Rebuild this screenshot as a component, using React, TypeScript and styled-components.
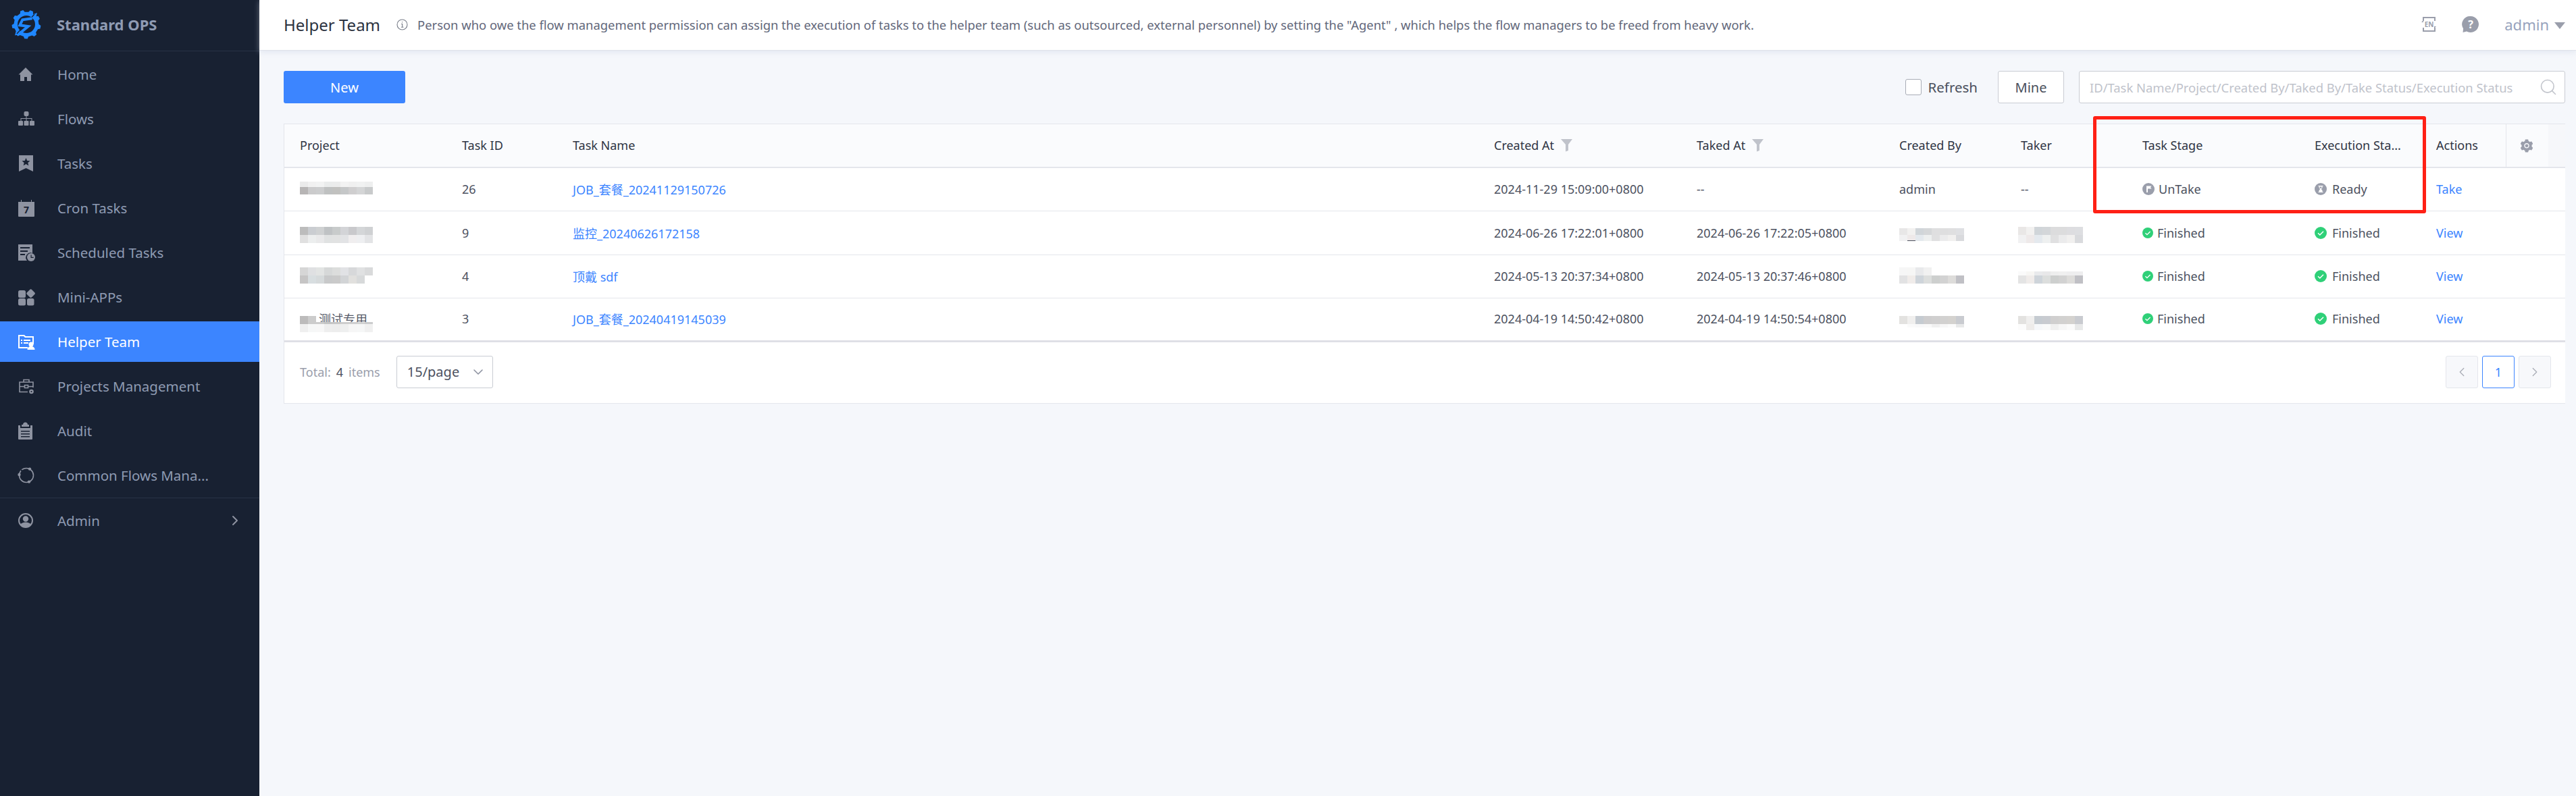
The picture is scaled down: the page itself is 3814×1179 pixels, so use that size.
import React from "react";
import styled, { createGlobalStyle } from "styled-components";
import { AiFillSetting } from "react-icons/ai";
import { ChevronDown, ChevronLeft, ChevronRight, Search } from "lucide-react";

const FONT = `"Noto Sans", "Noto Sans CJK SC", sans-serif`;

const GlobalStyle = createGlobalStyle`
  html, body {
    margin: 0;
    padding: 0;
    background: #f5f7fb;
    font-family: ${FONT};
  }
  * { box-sizing: border-box; }
`;

/* ---------- icons ---------- */

const gearPath = (cx: number, cy: number, r1: number, r2: number, teeth: number) => {
  const pts: string[] = [];
  for (let i = 0; i < teeth; i++) {
    const a = (i / teeth) * Math.PI * 2 + 0.2;
    const s = (Math.PI * 2) / teeth;
    [
      [a - s * 0.28, r1],
      [a - s * 0.15, r2],
      [a + s * 0.15, r2],
      [a + s * 0.28, r1],
    ].forEach(([t, r]) => {
      pts.push(`${(cx + Math.cos(t) * r).toFixed(2)} ${(cy + Math.sin(t) * r).toFixed(2)}`);
    });
  }
  return `M${pts.join("L")}Z`;
};

const Logo = () => (
  <svg width="44" height="44" viewBox="0 0 44 44">
    <path d={gearPath(22, 22, 18.5, 21.5, 9)} fill="#1f87ff" />
    <circle cx="22" cy="22" r="13" fill="#182132" />
    <path d="M38 5 27 9 35 17Z M5 38.500 16 35 8 27Z" fill="#1f87ff" />
    <path d="M34 7 8 36" stroke="#182132" strokeWidth="1.200" />
    <path
      d="M30.700 13.300 16.300 15.300 12.300 23.300 24.700 25 14.700 33.300"
      fill="none"
      stroke="#1f87ff"
      strokeWidth="4"
      strokeLinejoin="miter"
    />
  </svg>
);

const HomeIcon = () => (
  <svg width="24" height="24" viewBox="0 0 24 24" fill="currentColor">
    <path fillRule="evenodd" d="M12 2 1.500 12.500H4V22h16v-9.500h2.500L12 2ZM10 16h4v6h-4v-6Z" />
  </svg>
);
const FlowsIcon = () => (
  <svg width="26" height="26" viewBox="0 0 26 26" fill="currentColor">
    <rect x="9.500" y="2" width="7" height="7" rx="2" />
    <rect x="1" y="16" width="7" height="7" rx="1" />
    <rect x="9.500" y="16" width="7" height="7" rx="1" />
    <rect x="18" y="16" width="7" height="7" rx="1" />
    <path d="M12.500 9h1v3h8v4h-1v-3h-7v3h-1v-3h-7v3h-1v-4h8V9Z" />
  </svg>
);
const TasksIcon = () => (
  <svg width="26" height="26" viewBox="0 0 26 26" fill="currentColor">
    <path
      fillRule="evenodd"
      d="M2 1h21v24l-10.500-5L2 25V1Zm10.500 4 1.700 3.900 4.300.4-3.200 2.800 1 4.200-3.800-2.200-3.800 2.200 1-4.200-3.200-2.800 4.300-.4 1.700-3.900Z"
    />
  </svg>
);
const CronIcon = () => (
  <svg width="26" height="26" viewBox="0 0 26 26" fill="currentColor">
    <path d="M1 4h4V1h1v3h14V1h1v3h4v21a1 1 0 0 1-1 1H2a1 1 0 0 1-1-1V4Z" />
    <text x="13" y="21" fontSize="14" fontWeight="700" textAnchor="middle" fill="#182132" fontFamily={FONT}>
      7
    </text>
  </svg>
);
const ScheduledIcon = () => (
  <svg width="26" height="26" viewBox="0 0 26 26" fill="currentColor">
    <path
      fillRule="evenodd"
      d="M1 1h21v13a7 7 0 0 0-8 11H1V1Zm3 4v2h14V5H4Zm0 5v2h11v-2H4Zm0 5v2h7v-2H4Z"
    />
    <circle cx="20" cy="20" r="6" />
    <path d="M19.500 16.500h1.200v3.300h3v1.200h-4.200v-4.500Z" fill="#182132" />
  </svg>
);
const MiniIcon = () => (
  <svg width="26" height="26" viewBox="0 0 26 26" fill="currentColor">
    <rect x="1" y="3" width="11" height="11" rx="2.500" />
    <rect x="1" y="15" width="11" height="10.500" rx="2.500" />
    <rect x="14" y="15" width="10.500" height="10.500" rx="2.500" />
    <rect x="14.600" y="2.600" width="10" height="10" rx="2" transform="rotate(45 19.600 7.600)" />
  </svg>
);
const HelperIcon = () => (
  <svg width="26" height="26" viewBox="0 0 26 26" fill="currentColor">
    <path fillRule="evenodd" d="M1 3h9l2 2h12v12h-2V7H11L9 5H3v16h12v2H1V3Z" />
    <path d="M5 10h2v2H5zM9 10h10v2H9zM5 14h2v2H5zM9 14h7v2H9z" />
    <circle cx="20" cy="17" r="3.500" />
    <path d="M14.500 25c0-3.400 2.400-5 5.500-5s5.500 1.600 5.500 5h-11Z" />
  </svg>
);
const ProjectsIcon = () => (
  <svg width="26" height="26" viewBox="0 0 26 26" fill="none" stroke="currentColor" strokeWidth="1.600">
    <path d="M15 21.500H3V7h20v8" />
    <path d="M9 7V3.500h8V7M3 13.500h7m6 0h7" />
    <rect x="10.500" y="11.500" width="5" height="4" />
    <circle cx="20.500" cy="21" r="2.200" strokeWidth="2.200" />
  </svg>
);
const AuditIcon = () => (
  <svg width="26" height="26" viewBox="0 0 26 26" fill="currentColor">
    <path
      fillRule="evenodd"
      d="M8 4c0-2 1.500-3.500 3.500-3.500S15 2 15 4h2v3H6V4h2ZM1 5h3v4h15V5h3v20a1 1 0 0 1-1 1H2a1 1 0 0 1-1-1V5Zm4 8v1.500h13V13H5Zm0 4v1.500h13V17H5Zm0 4v1.500h13V21H5Z"
    />
  </svg>
);
const CommonIcon = () => (
  <svg width="26" height="26" viewBox="0 0 26 26" fill="none" stroke="currentColor" strokeWidth="1.600">
    <circle cx="13" cy="13" r="10.500" />
    <g fill="currentColor" stroke="none">
      <circle cx="18" cy="3.600" r="2.200" />
      <circle cx="2.500" cy="12" r="2.200" />
      <circle cx="17" cy="22.600" r="2.200" />
    </g>
    <path d="M5 6.500 7 5" stroke="#182132" strokeWidth="2" />
  </svg>
);
const AdminIcon = () => (
  <svg width="24" height="24" viewBox="0 0 24 24">
    <circle cx="12" cy="12" r="10" fill="none" stroke="currentColor" strokeWidth="2" />
    <circle cx="12" cy="9.500" r="4.200" fill="currentColor" />
    <path d="M4 18.500C5.500 15.500 8.500 14.500 12 14.500s6.500 1 8 4C18 21 15 22 12 22s-6-1-8-3.500Z" fill="currentColor" />
  </svg>
);

const EnIcon = () => (
  <svg width="24" height="24" viewBox="0 0 24 24">
    <path d="M4 7V2h17v5M21 17v5H4v-5" fill="none" stroke="#9a9eab" strokeWidth="2" />
    <path d="M1 9l3-3v3zM23 15l-3 3v-3z" fill="#9a9eab" />
    <text x="12.500" y="16" fontSize="10" fontWeight="700" textAnchor="middle" fill="#9a9eab" fontFamily={FONT}>
      EN
    </text>
  </svg>
);
const HelpIcon = () => (
  <svg width="26" height="26" viewBox="0 0 26 26">
    <path d="M13 1a12 12 0 1 1-6 22.400L1.500 25l.6-5.600A12 12 0 0 1 13 1Z" fill="#9a9eab" />
    <text x="13" y="19" fontSize="16" fontWeight="700" textAnchor="middle" fill="#fff" fontFamily={FONT}>
      ?
    </text>
  </svg>
);
const InfoIcon = () => (
  <svg width="17" height="17" viewBox="0 0 17 17" fill="none" stroke="#777c88" strokeWidth="1.100">
    <circle cx="8.500" cy="8.500" r="7.500" />
    <path d="M7 7.500h1.700v4.500M7 12.200h3.400" />
    <circle cx="8.500" cy="4.800" r=".7" fill="#777c88" stroke="none" />
  </svg>
);
const FilterIcon = () => (
  <svg width="17" height="20" viewBox="0 0 17 20" fill="#c0c3cb">
    <path d="M0 1h17l-6 8v9l-4 1.500V9L0 1Z" />
  </svg>
);
const CheckDot = ({ size }: { size: number }) => (
  <svg width={size} height={size} viewBox="0 0 18 18">
    <circle cx="9" cy="9" r="9" fill="#2fd078" />
    <path d="M5 9.300 7.800 12 13 6.700" fill="none" stroke="#fff" strokeWidth="1.500" />
  </svg>
);
const FlagDot = () => (
  <svg width="18" height="18" viewBox="0 0 18 18">
    <circle cx="9" cy="9" r="9" fill="#9a9eab" />
    <path d="M6 4.500h7.500l-1.500 2 1.500 2H8V14H6V4.500Z" fill="#fff" />
  </svg>
);
const HourglassDot = () => (
  <svg width="18" height="18" viewBox="0 0 18 18">
    <circle cx="9" cy="9" r="9" fill="#9a9eab" />
    <path d="M5.500 4h7v1h-1v2L9.800 9l1.700 2v2h1v1h-7v-1h1v-2l1.700-2-1.700-2V5h-1V4Z" fill="#fff" />
    <path d="M7.500 5.500h3V6.700L9 8.200 7.500 6.700z" fill="#9a9eab" />
  </svg>
);

/* mosaic over the blurred-out names */
type MosaicRow = { y: number; h: number; from?: number; colors: string[] };

const Mosaic = ({ rows, cell = 12 }: { rows: MosaicRow[]; cell?: number }) => (
  <svg width={cell * 9} height="30" shapeRendering="crispEdges">
    {rows.map((row, r) =>
      row.colors.map((c, i) => (
        <rect key={`${r}-${i}`} x={((row.from ?? 0) + i) * cell} y={row.y} width={cell} height={row.h} fill={c} />
      ))
    )}
  </svg>
);

/* ---------- layout ---------- */

const Page = styled.div`
  display: flex;
  width: 3814px;
  height: 1179px;
  overflow: hidden;
`;

const Sidebar = styled.aside`
  flex: 0 0 384px;
  background: #182132;
  color: #8f9bb3;
  display: flex;
  flex-direction: column;
`;

const Brand = styled.div`
  height: 76px;
  display: flex;
  align-items: center;
  border-bottom: 1px solid #283245;
  padding: 0 0 4px 17px;
  gap: 23px;
`;

const BrandName = styled.span`
  font-size: 22px;
  font-weight: 700;
  color: #8f9bb3;
`;

const Nav = styled.nav`
  display: flex;
  flex-direction: column;
  padding-top: 4px;
`;

const NavItem = styled.div<{ $active?: boolean }>`
  height: 60px;
  margin-bottom: 6px;
  display: flex;
  align-items: center;
  padding: 0 24px 0 26px;
  font-size: 20.500px;
  background: ${(p) => (p.$active ? "#3c85ff" : "transparent")};
  color: ${(p) => (p.$active ? "#fff" : "#8f9bb3")};
`;

const AdminItem = styled(NavItem)`
  margin-top: 5px;
`;

const NavIcon = styled.span<{ $active?: boolean }>`
  flex: 0 0 59px;
  display: flex;
  align-items: center;
  color: ${(p) => (p.$active ? "#fff" : "#8e93a1")};
`;

const NavLabel = styled.span`
  flex: 1;
`;

const NavDivider = styled.div`
  height: 1px;
  background: #283245;
  margin: -3px 0 -2px;
`;

const Content = styled.div`
  flex: 1;
  display: flex;
  flex-direction: column;
  min-width: 0;
`;

const Header = styled.header`
  height: 75px;
  background: #fff;
  border-bottom: 1px solid #dfe2ea;
  box-shadow: 0 2px 8px rgba(200, 208, 228, 0.45);
  display: flex;
  align-items: center;
  padding: 0 16px 2px 36px;
  flex: 0 0 auto;
`;

const Title = styled.h1`
  margin: 0;
  font-size: 24px;
  font-weight: 400;
  color: #2c3240;
`;

const Description = styled.span`
  display: flex;
  align-items: center;
  gap: 14px;
  margin-left: 24px;
  font-size: 18.400px;
  color: #62677a;
  flex: 1;
  white-space: nowrap;
`;

const HeaderTools = styled.div`
  display: flex;
  align-items: center;
`;

const HeaderTool = styled.span`
  display: flex;
  margin-right: 37px;
`;

const UserName = styled.span`
  font-size: 22px;
  color: #97a3bd;
  margin-right: 8px;
`;

const Caret = styled.span`
  width: 0;
  height: 0;
  border-left: 8px solid transparent;
  border-right: 8px solid transparent;
  border-top: 10px solid #9a9eab;
  margin-top: 3px;
`;

const Main = styled.main`
  position: relative;
  padding: 30px 16px 0 36px;
`;

const Toolbar = styled.div`
  display: flex;
  align-items: center;
  height: 48px;
  margin-bottom: 30px;
`;

const PrimaryButton = styled.button`
  width: 180px;
  height: 48px;
  background: #3c85ff;
  color: #fff;
  border: 0;
  border-radius: 3px;
  font: 20px ${FONT};
`;

const RefreshLabel = styled.label`
  display: flex;
  align-items: center;
  gap: 10px;
  margin-left: auto;
  font-size: 20.500px;
  color: #4a4f5c;
`;

const CheckBox = styled.span`
  width: 24px;
  height: 24px;
  border: 1px solid #a9adb6;
  border-radius: 3px;
  background: #fff;
`;

const GhostButton = styled.button`
  width: 98px;
  height: 48px;
  margin: 0 22px 0 30px;
  background: #fff;
  border: 1px solid #c9ccd3;
  border-radius: 3px;
  color: #4a4f5c;
  font: 20px ${FONT};
`;

const SearchBox = styled.div`
  width: 720px;
  height: 48px;
  background: #fff;
  border: 1px solid #c9ccd3;
  border-radius: 3px;
  display: flex;
  align-items: center;
  justify-content: space-between;
  padding: 0 10px 0 15px;
  font-size: 18.400px;
  color: #bfc3cb;
  white-space: nowrap;
`;

const Card = styled.section`
  background: #fff;
  border: 1px solid #e4e6ec;
  border-width: 1px 0 1px 1px;
  height: 415px;
`;

const COLUMNS = "240px 164px 1364px 300px 300px 180px 180px 255px 180px 126px 63px 25px";

const HeadRow = styled.div`
  display: grid;
  grid-template-columns: ${COLUMNS};
  height: 65px;
  background: #fafbfd;
  border-bottom: 2px solid #e4e6ec;
  font-size: 18px;
  color: #2f3544;
`;

const HeadCell = styled.div`
  display: flex;
  align-items: center;
  gap: 10px;
  padding: 0 0 2px 23px;
  white-space: nowrap;
`;

const GearCell = styled.div`
  display: flex;
  align-items: center;
  justify-content: center;
  border-left: 1px solid #e4e6ec;
  color: #9a9eab;
  padding-right: 2px;
`;

const Gutter = styled.div`
  background: #f6f7fa;
`;

const BodyRow = styled.div<{ $last?: boolean }>`
  display: grid;
  grid-template-columns: ${COLUMNS};
  height: 64.400px;
  border-bottom: ${(p) => (p.$last ? "3px solid #dfe0e6" : "1px solid #e4e6ec")};
  font-size: 18px;
  color: #4c5160;
`;

const Cell = styled.div`
  position: relative;
  display: flex;
  align-items: center;
  padding: 0 0 1px 23px;
  white-space: nowrap;
`;

const Blur = styled.div<{ $left: number; $top: number }>`
  position: absolute;
  left: ${(p) => p.$left}px;
  top: ${(p) => p.$top}px;
  line-height: 0;
`;

const Hidden = styled.span`
  margin-left: 28px;
  color: #555a68;
`;

const TextLink = styled.a`
  color: #3c85ff;
`;

const Status = styled.span<{ $gap: number }>`
  display: flex;
  align-items: center;
  gap: ${(p) => p.$gap}px;
`;

const CardFooter = styled.div`
  height: 88px;
  display: flex;
  align-items: center;
  padding: 0 21px 0 23px;
  font-size: 18px;
  color: #9a9eab;
`;

const TotalCount = styled.b`
  font-weight: 400;
  color: #4c5160;
  margin: 0 8px;
`;

const PageSize = styled.div`
  width: 143px;
  height: 48px;
  margin-left: 24px;
  border: 1px solid #c9ccd3;
  border-radius: 3px;
  display: flex;
  align-items: center;
  justify-content: space-between;
  padding: 0 9px 0 15px;
  font-size: 20px;
  color: #4c5160;
`;

const Pager = styled.div`
  display: flex;
  gap: 6px;
  margin-left: auto;
`;

const PagerButton = styled.div<{ $current?: boolean }>`
  width: 48px;
  height: 48px;
  display: flex;
  align-items: center;
  justify-content: center;
  border: 1px solid ${(p) => (p.$current ? "#3c85ff" : "#e4e6ec")};
  border-radius: 3px;
  background: ${(p) => (p.$current ? "#fff" : "#f7f8fb")};
  color: ${(p) => (p.$current ? "#3c85ff" : "#a9adb6")};
  font-size: 18px;
`;

const Highlight = styled.div`
  position: absolute;
  left: 2715px;
  top: 97px;
  width: 493px;
  height: 144px;
  border: 5px solid #ff2015;
  border-radius: 3px;
  pointer-events: none;
`;

/* ---------- data ---------- */

const navTop = [
  { label: "Home", icon: <HomeIcon /> },
  { label: "Flows", icon: <FlowsIcon /> },
  { label: "Tasks", icon: <TasksIcon /> },
  { label: "Cron Tasks", icon: <CronIcon /> },
  { label: "Scheduled Tasks", icon: <ScheduledIcon /> },
  { label: "Mini-APPs", icon: <MiniIcon /> },
];

const navBottom = [
  { label: "Helper Team", icon: <HelperIcon />, active: true },
  { label: "Projects Management", icon: <ProjectsIcon /> },
  { label: "Audit", icon: <AuditIcon /> },
  { label: "Common Flows Mana...", icon: <CommonIcon /> },
];

const dash = "#4c5160";

const rows = [
  {
    id: "26",
    name: "JOB_套餐_20241129150726",
    created: "2024-11-29 15:09:00+0800",
    taked: "--",
    project: {
      top: 20,
      rows: [
        { y: 0, h: 8, colors: ["#ebebeb", "#f1f1f1", "#f2f3f3", "#eaecec", "#ebecec", "#f3f3f3", "#f0f0f0", "#f1f2f2", "#eeefef"] },
        { y: 8, h: 11, colors: ["#b7b5b5", "#cbcbcc", "#cccdce", "#bfc1c1", "#c1c1bf", "#c5c7c8", "#cfcecf", "#d4d5d6", "#c8cacb"] },
      ],
    },
    by: "admin",
    taker: "--",
    pending: true,
    action: "Take",
  },
  {
    id: "9",
    name: "监控_20240626172158",
    created: "2024-06-26 17:22:01+0800",
    taked: "2024-06-26 17:22:05+0800",
    project: {
      top: 23,
      rows: [
        { y: 0, h: 12, colors: ["#bcbcbc", "#cacdd1", "#cfd1d2", "#bfc2c4", "#c8cbcb", "#d3d4d7", "#c9c9cc", "#d4d6d8", "#cfd1d3"] },
        { y: 12, h: 12, colors: ["#e0e0e0", "#eceeee", "#e9e9ea", "#e0e2e2", "#e1e2e2", "#e2e3e5", "#f0eeef", "#eeeff1", "#e3e4e6"] },
      ],
    },
    byBlur: {
      top: 25,
      rows: [
        { y: 0, h: 10, colors: ["#e8e7e7", "#f2f1f0", "#d0d5d9", "#d5d7d9", "#dfdfe0", "#dededf", "#dfdfe0", "#dfe0e3"] },
        { y: 10, h: 9, colors: ["#f1f1f2", "#eee9e9", "#e4e9ee", "#eef0f0", "#e0e0e1", "#ebebec", "#f1f0ef", "#d9dadd"] },
        { y: 18, h: 1, from: 1, colors: [dash] },
      ],
    },
    takerBlur: {
      top: 23,
      rows: [
        { y: 0, h: 12, colors: ["#e9e7e6", "#f2f1f0", "#d0d5d9", "#d3d6d9", "#dcdcdd", "#dcdcdd", "#dddde0", "#dddee1"] },
        { y: 12, h: 12, colors: ["#f1f1f2", "#eee9e9", "#e4e9ee", "#eef0f0", "#e0e0e1", "#ebebec", "#f1f0ef", "#d9dadd"] },
      ],
    },
    action: "View",
  },
  {
    id: "4",
    name: "顶戴 sdf",
    created: "2024-05-13 20:37:34+0800",
    taked: "2024-05-13 20:37:46+0800",
    project: {
      top: 18,
      rows: [
        { y: 0, h: 12, colors: ["#d6d6d6", "#dfe0e2", "#e2e4e3", "#d6d8d8", "#dcdddc", "#e1e2e5", "#d7d8da", "#e0e1e2", "#d9dadb"] },
        { y: 12, h: 12, colors: ["#c6c5c5", "#d8dee0", "#d6dadb", "#c8c9ca", "#cacaca", "#d2d4d6", "#e1e0de", "#d7d9da"] },
      ],
    },
    byBlur: {
      top: 18,
      rows: [
        { y: 0, h: 12, colors: ["#f6f6f6", "#f6f6f5", "#e8e9eb", "#f1f1f1"] },
        { y: 12, h: 12, colors: ["#e2e2e3", "#f0ecea", "#ced4da", "#dcdedd", "#cdcfce", "#d2d2d2", "#dddcda", "#c0c0c5"] },
      ],
    },
    takerBlur: {
      top: 24,
      rows: [
        { y: 0, h: 6, colors: ["#fafafa", "#f7f6f4", "#e9eaec", "#e8e8e9", "#eeeeee", "#f0f0f0", "#eeeeef", "#eeeeef"] },
        { y: 6, h: 12, colors: ["#e4e4e4", "#f0ecea", "#ced4da", "#dcdedd", "#cdcfce", "#d2d2d2", "#dddcda", "#c0c0c5"] },
      ],
    },
    action: "View",
  },
  {
    id: "3",
    name: "JOB_套餐_20240419145039",
    created: "2024-04-19 14:50:42+0800",
    taked: "2024-04-19 14:50:54+0800",
    hidden: "测试专用",
    project: {
      top: 26,
      rows: [
        { y: 0, h: 9, colors: ["#bcbbbb", "#cccccc"] },
        { y: 9, h: 3, colors: ["#bcbbbb", "#cccccc", "#cccccc", "#c3c4c4", "#c7c7c7", "#cdcdcd", "#cfcfd0", "#d0d1d1", "#cbcccd"] },
        { y: 12, h: 12, colors: ["#efefef", "#f6f7f7", "#f7f7f7", "#eeeeee", "#ededed", "#eeefef", "#f6f6f6", "#f6f7f7", "#f0f0f0"] },
      ],
    },
    byBlur: {
      top: 26,
      rows: [
        { y: 0, h: 12, colors: ["#e3e2e0", "#f0efee", "#c5cbd1", "#cecdce", "#d0cfcf", "#d2d1d0", "#d4d2cf", "#c9cbd0"] },
        { y: 12, h: 5, colors: ["#ffffff", "#fafafa", "#f8f8f9", "#f9f9f9", "#f0f0f0", "#f7f7f7", "#fbfbfb", "#e8e9e9"] },
      ],
    },
    takerBlur: {
      top: 26,
      rows: [
        { y: 0, h: 12, colors: ["#e3e2e0", "#f0efee", "#c5cbd1", "#c8cbd0", "#d0cfcf", "#d2d1d0", "#d4d2cf", "#c9cbd0"] },
        { y: 12, h: 9, colors: ["#fcfcfc", "#eeecea", "#f6f8fa", "#f9fafa", "#f0f0f0", "#f7f7f7", "#fbfbfb", "#e8e9e9"] },
      ],
    },
    action: "View",
  },
];

const App: React.FC = () => {
  return (
    <Page>
      <GlobalStyle />
      <Sidebar>
        <Brand>
          <Logo />
          <BrandName>Standard OPS</BrandName>
        </Brand>
        <Nav>
          {navTop.map((item) => (
            <NavItem key={item.label}>
              <NavIcon>{item.icon}</NavIcon>
              <NavLabel>{item.label}</NavLabel>
            </NavItem>
          ))}
          {navBottom.map((item) => (
            <NavItem key={item.label} $active={item.active}>
              <NavIcon $active={item.active}>{item.icon}</NavIcon>
              <NavLabel>{item.label}</NavLabel>
            </NavItem>
          ))}
          <NavDivider />
          <AdminItem>
            <NavIcon>
              <AdminIcon />
            </NavIcon>
            <NavLabel>Admin</NavLabel>
            <ChevronRight size={24} strokeWidth={2} color="#8e93a1" />
          </AdminItem>
        </Nav>
      </Sidebar>

      <Content>
        <Header>
          <Title>Helper Team</Title>
          <Description>
            <InfoIcon />
            Person who owe the flow management permission can assign the execution of tasks to the helper team (such as
            outsourced, external personnel) by setting the "Agent" , which helps the flow managers to be freed from heavy
            work.
          </Description>
          <HeaderTools>
            <HeaderTool>
              <EnIcon />
            </HeaderTool>
            <HeaderTool>
              <HelpIcon />
            </HeaderTool>
            <UserName>admin</UserName>
            <Caret />
          </HeaderTools>
        </Header>

        <Main>
          <Toolbar>
            <PrimaryButton>New</PrimaryButton>
            <RefreshLabel>
              <CheckBox />
              Refresh
            </RefreshLabel>
            <GhostButton>Mine</GhostButton>
            <SearchBox>
              ID/Task Name/Project/Created By/Taked By/Take Status/Execution Status
              <Search size={28} strokeWidth={1.4} color="#c3c6cd" />
            </SearchBox>
          </Toolbar>

          <Card>
            <HeadRow>
              <HeadCell>Project</HeadCell>
              <HeadCell>Task ID</HeadCell>
              <HeadCell>Task Name</HeadCell>
              <HeadCell>Created At<FilterIcon /></HeadCell>
              <HeadCell>Taked At<FilterIcon /></HeadCell>
              <HeadCell>Created By</HeadCell>
              <HeadCell>Taker</HeadCell>
              <HeadCell>Task Stage</HeadCell>
              <HeadCell>Execution Sta...</HeadCell>
              <HeadCell>Actions</HeadCell>
              <GearCell><AiFillSetting size={22} /></GearCell>
              <Gutter />
            </HeadRow>

            {rows.map((row, i) => (
              <BodyRow key={row.id} $last={i === rows.length - 1}>
                <Cell>
                  {row.hidden && <Hidden>{row.hidden}</Hidden>}
                  <Blur $left={23} $top={row.project.top}>
                    <Mosaic rows={row.project.rows} />
                  </Blur>
                </Cell>
                <Cell>{row.id}</Cell>
                <Cell><TextLink>{row.name}</TextLink></Cell>
                <Cell>{row.created}</Cell>
                <Cell>{row.taked}</Cell>
                <Cell>
                  {row.by}
                  {row.byBlur && (
                    <Blur $left={23} $top={row.byBlur.top}>
                      <Mosaic rows={row.byBlur.rows} />
                    </Blur>
                  )}
                </Cell>
                <Cell>
                  {row.taker}
                  {row.takerBlur && (
                    <Blur $left={19} $top={row.takerBlur.top}>
                      <Mosaic rows={row.takerBlur.rows} />
                    </Blur>
                  )}
                </Cell>
                <Cell>
                  <Status $gap={6}>
                    {row.pending ? <FlagDot /> : <CheckDot size={16} />}
                    {row.pending ? "UnTake" : "Finished"}
                  </Status>
                </Cell>
                <Cell>
                  <Status $gap={8}>
                    {row.pending ? <HourglassDot /> : <CheckDot size={18} />}
                    {row.pending ? "Ready" : "Finished"}
                  </Status>
                </Cell>
                <Cell><TextLink>{row.action}</TextLink></Cell>
              </BodyRow>
            ))}

            <CardFooter>
              Total:<TotalCount>4</TotalCount>items
              <PageSize>
                15/page
                <ChevronDown size={24} strokeWidth={1.6} color="#8e93a1" />
              </PageSize>
              <Pager>
                <PagerButton><ChevronLeft size={22} strokeWidth={1.4} /></PagerButton>
                <PagerButton $current>1</PagerButton>
                <PagerButton><ChevronRight size={22} strokeWidth={1.4} /></PagerButton>
              </Pager>
            </CardFooter>
          </Card>

          <Highlight />
        </Main>
      </Content>
    </Page>
  );
};

export default App;
